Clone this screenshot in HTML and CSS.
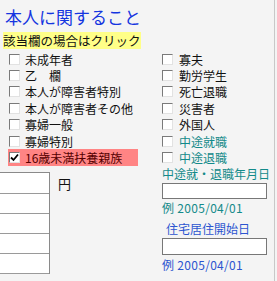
FILE: index.html
```html
<!doctype html>
<html>
	<head>
		<title>本人に関すること</title>
		<meta charset="utf-8" />
		<link rel="stylesheet" href="styles.css">
	</head>
	<body>
		<div class="page">
			<h2 class="title">本人に関すること</h2>
			<div class="hint">該当欄の場合はクリック</div>
			<div class="cols">
				<div class="left">
					<ul class="checks">
						<li><span class="cb"></span>未成年者</li>
						<li><span class="cb"></span>乙　欄</li>
						<li><span class="cb"></span>本人が障害者特別</li>
						<li><span class="cb"></span>本人が障害者その他</li>
						<li><span class="cb"></span>寡婦一般</li>
						<li><span class="cb"></span>寡婦特別</li>
						<li class="on"><span class="cb"><svg width="9" height="9" viewBox="0 0 9 9"><path d="M1 4.5 L3.5 7 L8 1.5" fill="none" stroke="#000" stroke-width="1.8"/></svg></span>16歳未満扶養親族</li>
					</ul>
					<div class="amount">
						<div class="boxes">
							<div class="box"></div>
							<div class="box"></div>
							<div class="box"></div>
							<div class="box"></div>
							<div class="box"></div>
						</div>
						<span class="yen">円</span>
					</div>
				</div>
				<div class="right">
					<ul class="checks">
						<li><span class="cb"></span>寡夫</li>
						<li><span class="cb"></span>勤労学生</li>
						<li><span class="cb"></span>死亡退職</li>
						<li><span class="cb"></span>災害者</li>
						<li><span class="cb"></span>外国人</li>
						<li class="teal"><span class="cb"></span>中途就職</li>
						<li class="teal"><span class="cb"></span>中途退職</li>
					</ul>
					<div class="label teal">中途就・退職年月日</div>
					<div class="field"></div>
					<div class="ex teal">例 2005/04/01</div>
					<div class="label blue indent">住宅居住開始日</div>
					<div class="field tall"></div>
					<div class="ex blue last">例 2005/04/01</div>
				</div>
			</div>
		</div>
	</body>
</html>
```

FILE: styles.css
```css
*{
	margin:0;
	padding:0;
}

body{
	background:#f4f4f4;
	font-family:"Noto Sans CJK JP", sans-serif;
	color:#111;
}

.page{
	width:274px;
	height:281px;
	border-right:1px solid #c8c8c8;
	overflow:hidden;
}

.title{
	font-size:17px;
	font-weight:normal;
	line-height:24px;
	color:#1535e0;
	padding:5px 0 0 5px;
}

.hint{
	width:max-content;
	margin:3px 0 0 3px;
	background:#ffff88;
	font-size:12.5px;
	line-height:17px;
}

.cols{
	display:flex;
	margin-top:2px;
}

.left{
	width:153px;
}

.right{
	flex:1;
	padding-left:9px;
}

.checks{
	list-style:none;
}

.checks li{
	display:flex;
	align-items:center;
	height:16.4px;
	font-size:12px;
	white-space:nowrap;
}

.left .checks li{
	margin-left:8px;
	width:130px;
}

.cb{
	display:flex;
	align-items:center;
	justify-content:center;
	width:9px;
	height:9px;
	margin:0 5px 0 1px;
	background:#fff;
	border:1px solid;
	border-color:#7a7a7a #e2e2e2 #e2e2e2 #7a7a7a;
}

.right .cb{
	margin:0 6px 0 0;
}

.checks li.on{
	background:#ff8484;
	color:#500;
}

.teal{
	color:#138a8a;
}

.blue{
	color:#2c55d0;
}

.amount{
	display:flex;
	align-items:flex-start;
	margin-top:6px;
}

.boxes{
	width:49px;
	border-top:1px solid #8a8a8a;
	border-right:1px solid #8a8a8a;
}

.box{
	height:19px;
	background:#fff;
	border-bottom:1px solid #9a9a9a;
}

.box:first-child{
	height:20px;
}

.yen{
	font-size:13px;
	line-height:18px;
	margin:3px 0 0 8px;
}

.label{
	font-size:12px;
	line-height:16px;
}

.indent{
	margin:5px 0 0 4px;
}

.field{
	width:103px;
	height:14px;
	margin-top:1px;
	background:#fff;
	border:1px solid #777;
}

.field.tall{
	height:15px;
}

.ex{
	font-size:12px;
	letter-spacing:0.3px;
	line-height:16px;
	margin-top:1px;
}

.ex.last{
	margin-top:2px;
}
```
